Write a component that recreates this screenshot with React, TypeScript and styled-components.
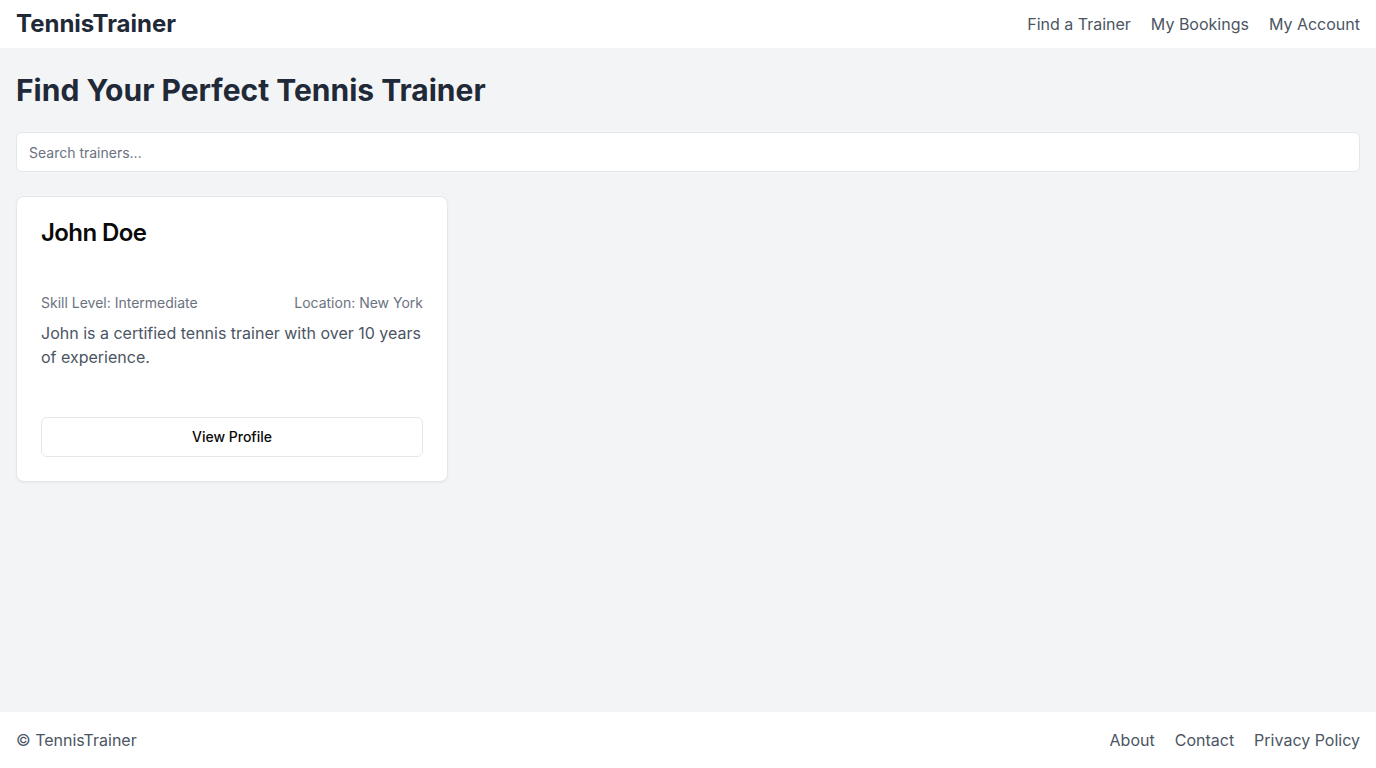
import React from "react";
import styled, { createGlobalStyle } from "styled-components";

const GlobalStyle = createGlobalStyle`
  * { box-sizing: border-box; }
  html, body { margin: 0; padding: 0; }
  body {
    font-family: Inter, "Noto Sans", sans-serif;
    background: #f3f4f6;
    color: #1f2937;
  }
`;

const Page = styled.div`
  min-height: 768px;
  display: flex;
  flex-direction: column;
`;

const Header = styled.header`
  height: 48px;
  background: #ffffff;
  display: flex;
  align-items: center;
  justify-content: space-between;
  padding: 0 16px;
`;

const Logo = styled.div`
  font-size: 24px;
  font-weight: 700;
  color: #1f2937;
  line-height: 32px;
`;

const LinkRow = styled.nav`
  display: flex;
  gap: 20px;
`;

const NavLink = styled.a`
  font-size: 16px;
  line-height: 24px;
  color: #4b5563;
  text-decoration: none;
`;

const Main = styled.main`
  flex: 1;
  padding: 24px 16px;
  display: flex;
  flex-direction: column;
`;

const Title = styled.h1`
  margin: 0 0 24px;
  font-size: 30px;
  line-height: 36px;
  font-weight: 700;
  color: #1f2937;
`;

const Search = styled.input`
  height: 40px;
  width: 100%;
  border: 1px solid #e5e7eb;
  border-radius: 6px;
  background: #ffffff;
  padding: 0 12px;
  font-family: Inter, sans-serif;
  font-size: 14px;
  color: #1f2937;
  margin-bottom: 24px;
  outline: none;
  &::placeholder { color: #6b7280; }
`;

const Grid = styled.div`
  display: grid;
  grid-template-columns: repeat(3, 1fr);
  gap: 24px;
`;

const Card = styled.div`
  background: #ffffff;
  border: 1px solid #e5e7eb;
  border-radius: 8px;
  box-shadow: 0 1px 2px rgba(0, 0, 0, 0.05);
  padding: 24px;
  display: flex;
  flex-direction: column;
`;

const Name = styled.h3`
  margin: 0;
  font-size: 24px;
  line-height: 24px;
  font-weight: 600;
  letter-spacing: -0.6px;
  color: #0a0a0a;
`;

const MetaRow = styled.div`
  margin-top: 48px;
  display: flex;
  justify-content: space-between;
  font-size: 14px;
  line-height: 20px;
  color: #6b7280;
`;

const Description = styled.p`
  margin: 8px 0 0;
  font-size: 16px;
  line-height: 24px;
  color: #4b5563;
`;

const Button = styled.button`
  margin-top: 48px;
  height: 40px;
  width: 100%;
  border: 1px solid #e5e7eb;
  border-radius: 6px;
  background: #ffffff;
  font-family: Inter, sans-serif;
  font-size: 14px;
  line-height: 20px;
  font-weight: 500;
  color: #0a0a0a;
  padding: 0 16px 1px;
  cursor: pointer;
`;

const Footer = styled.footer`
  height: 56px;
  background: #ffffff;
  display: flex;
  align-items: center;
  justify-content: space-between;
  padding: 0 16px;
`;

const Copyright = styled.div`
  font-size: 16px;
  line-height: 24px;
  color: #4b5563;
`;

export default function App() {
  return (
    <>
      <GlobalStyle />
      <Page>
        <Header>
          <Logo>TennisTrainer</Logo>
          <LinkRow>
            <NavLink href="#">Find a Trainer</NavLink>
            <NavLink href="#">My Bookings</NavLink>
            <NavLink href="#">My Account</NavLink>
          </LinkRow>
        </Header>
        <Main>
          <Title>Find Your Perfect Tennis Trainer</Title>
          <Search placeholder="Search trainers..." />
          <Grid>
            <Card>
              <Name>John Doe</Name>
              <MetaRow>
                <span>Skill Level: Intermediate</span>
                <span>Location: New York</span>
              </MetaRow>
              <Description>
                John is a certified tennis trainer with over 10 years of experience.
              </Description>
              <Button>View Profile</Button>
            </Card>
          </Grid>
        </Main>
        <Footer>
          <Copyright>© TennisTrainer</Copyright>
          <LinkRow>
            <NavLink href="#">About</NavLink>
            <NavLink href="#">Contact</NavLink>
            <NavLink href="#">Privacy Policy</NavLink>
          </LinkRow>
        </Footer>
      </Page>
    </>
  );
}
